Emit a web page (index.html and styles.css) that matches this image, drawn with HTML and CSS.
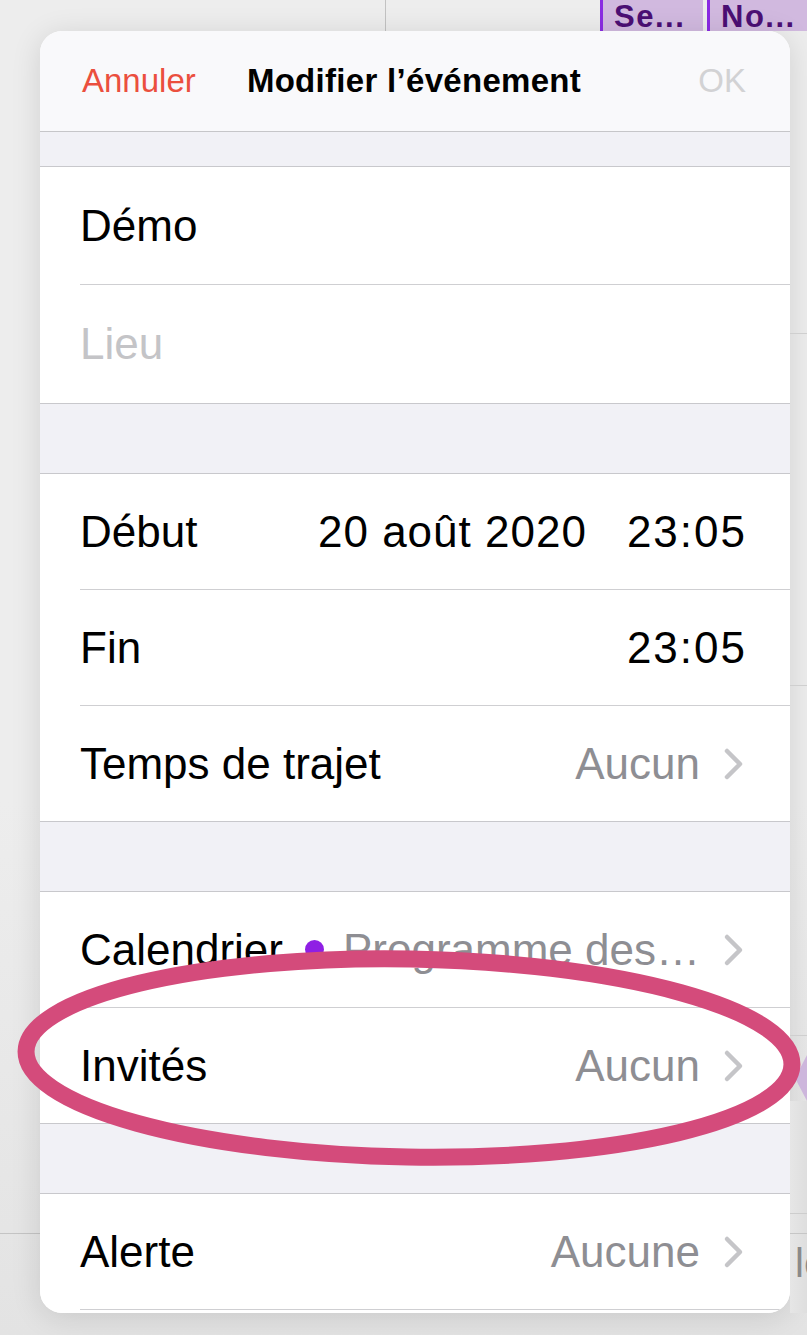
FILE: index.html
```html
<!doctype html>
<html lang="fr">
<head>
    <meta charset="UTF-8">
    <meta name="viewport" content="width=device-width, initial-scale=1.0">
    <title>Modifier l’événement</title>
    <link rel="stylesheet" href="styles.css">
</head>
<body>
    <div class="screen">
        <div class="backdrop-top">
            <div class="grid-line"></div>
            <div class="chips">
                <div class="chip">Se...</div>
                <div class="chip">No...</div>
            </div>
        </div>

        <div class="main-row">
            <div class="gutter-left"></div>

            <div class="sheet">
                <div class="sheet-header">
                    <a href="#" class="btn-cancel">Annuler</a>
                    <span class="sheet-title">Modifier l’événement</span>
                    <a href="#" class="btn-ok">OK</a>
                </div>

                <div class="band band-first"></div>

                <div class="group group-title">
                    <div class="row"><span class="label">Démo</span></div>
                    <div class="row"><span class="label placeholder">Lieu</span></div>
                </div>

                <div class="band"></div>

                <div class="group">
                    <div class="row">
                        <span class="label">Début</span>
                        <span class="value dark date">20 août 2020</span>
                        <span class="value dark time">23:05</span>
                    </div>
                    <div class="row">
                        <span class="label">Fin</span>
                        <span class="value dark time">23:05</span>
                    </div>
                    <div class="row">
                        <span class="label">Temps de trajet</span>
                        <span class="value">Aucun</span>
                        <svg class="chevron" viewBox="0 0 22 34"><path d="M4 4 L17 17 L4 30"/></svg>
                    </div>
                </div>

                <div class="band"></div>

                <div class="group">
                    <div class="row">
                        <span class="label">Calendrier</span>
                        <span class="value calendar"><i class="dot"></i>Programme des…</span>
                        <svg class="chevron" viewBox="0 0 22 34"><path d="M4 4 L17 17 L4 30"/></svg>
                    </div>
                    <div class="row">
                        <span class="label">Invités</span>
                        <span class="value">Aucun</span>
                        <svg class="chevron" viewBox="0 0 22 34"><path d="M4 4 L17 17 L4 30"/></svg>
                    </div>
                </div>

                <div class="band"></div>

                <div class="group">
                    <div class="row">
                        <span class="label">Alerte</span>
                        <span class="value">Aucune</span>
                        <svg class="chevron" viewBox="0 0 22 34"><path d="M4 4 L17 17 L4 30"/></svg>
                    </div>
                    <div class="row"></div>
                </div>
            </div>

            <div class="gutter-right">
                <div class="peek-arrow"></div>
                <div class="peek-shade">
                    <span class="peek">le</span>
                </div>
            </div>
        </div>

        <!-- annotation autour de la ligne Invités -->
        <svg class="ring" viewBox="0 0 807 1335">
            <ellipse cx="409" cy="1058" rx="383" ry="99" transform="rotate(1 409 1058)"/>
        </svg>
    </div>
</body>
</html>
```

FILE: styles.css
```css
body {
    margin: 0;
    background-color: #ebebeb;
    font-family: "Liberation Sans", Arial, sans-serif;
}

.screen {
    position: relative;
    width: 807px;
    height: 1335px;
    overflow: hidden;
    background: linear-gradient(#ededed 60%, #e3e3e3);
}

.backdrop-top {
    height: 31px;
    display: flex;
}

.grid-line {
    margin-left: 385px;
    width: 1px;
    background-color: #c2c2c2;
}

.chips {
    margin-left: auto;
    display: flex;
    gap: 4px;
}

.chip {
    width: 100px;
    height: 31px;
    box-sizing: border-box;
    padding: 3px 0 0 11px;
    background-color: #d1b9df;
    border-left: 3px solid #8a2be2;
    color: #4b0f74;
    font-size: 31px;
    font-weight: bold;
    letter-spacing: 1.5px;
    line-height: 28px;
    overflow: hidden;
    white-space: nowrap;
}

.chip:first-child {
    width: 103px;
}

.main-row {
    display: flex;
}

.gutter-left {
    width: 40px;
    flex-shrink: 0;
    background: linear-gradient(#c4c4c4, #c4c4c4) 0 1202px / 100% 1px no-repeat;
}

.gutter-right {
    width: 17px;
    flex-shrink: 0;
    display: flex;
    flex-direction: column;
    overflow: hidden;
    background:
        linear-gradient(#cfcfcf, #cfcfcf) 0 302px / 100% 1px no-repeat,
        linear-gradient(#cfcfcf, #cfcfcf) 0 654px / 100% 1px no-repeat,
        linear-gradient(#cfcfcf, #cfcfcf) 0 1004px / 100% 1px no-repeat;
}

.peek-arrow {
    margin-top: 1024px;
    margin-left: 5px;
    width: 12px;
    height: 46px;
    background-color: #cdb6dc;
    clip-path: polygon(100% 0, 0 50%, 100% 100%);
}

.peek-shade {
    flex: 1;
    display: flex;
    flex-direction: column;
    justify-content: flex-end;
    background:
        linear-gradient(#cdcdcd, #cdcdcd) 0 112px / 100% 1px no-repeat,
        linear-gradient(#c6c6c6, #c6c6c6) 0 132px / 100% 1px no-repeat,
        linear-gradient(90deg, #e6e6e6, #dedede);
}

.peek {
    margin-bottom: 30px;
    margin-left: 5px;
    color: #8a8a8a;
    font-size: 40px;
    line-height: 40px;
    white-space: nowrap;
}

.sheet {
    width: 750px;
    height: 1282px;
    flex-shrink: 0;
    background-color: #ffffff;
    border-radius: 22px;
    overflow: hidden;
    box-shadow: 0 4px 30px rgba(0, 0, 0, 0.12);
}

.sheet-header {
    height: 100px;
    display: grid;
    grid-template-columns: 1fr auto 1fr;
    align-items: center;
    padding: 0 44px 0 42px;
    background-color: #f9f9fb;
    border-bottom: 1px solid #c6c6c9;
    font-size: 33px;
}

.sheet-header a {
    text-decoration: none;
}

.btn-cancel {
    color: #eb4f3e;
}

.sheet-title {
    color: #000000;
    font-weight: bold;
    font-size: 33px;
    letter-spacing: 0.3px;
}

.btn-ok {
    justify-self: end;
    color: #d2d2d4;
}

.band {
    height: 69px;
    background-color: #f1f1f6;
}

.band-first {
    height: 34px;
}

.group {
    background-color: #ffffff;
    border-top: 1px solid #c8c8cc;
    border-bottom: 1px solid #c8c8cc;
    padding-left: 40px;
}

.row {
    height: 115px;
    display: flex;
    align-items: center;
    padding-right: 45px;
    font-size: 44px;
    color: #000000;
    border-bottom: 1px solid #cfcfd2;
}

.row:last-child {
    border-bottom: none;
}

.group-title .row {
    height: 117px;
}

.group-title .row:last-child {
    height: 118px;
}

.label {
    flex-shrink: 0;
}

.placeholder {
    color: #c4c4c7;
}

.value {
    margin-left: auto;
    color: #8e8e93;
    white-space: nowrap;
}

.value.dark {
    color: #000000;
}

.date {
    letter-spacing: 1px;
}

.time {
    letter-spacing: 2px;
    margin-right: -2px;
}

.date + .time {
    margin-left: 40px;
}

.calendar {
    display: flex;
    align-items: center;
}

.dot {
    width: 19px;
    height: 19px;
    margin-right: 19px;
    border-radius: 50%;
    background-color: #8f1fe4;
}

.chevron {
    width: 22px;
    height: 34px;
    margin-left: 23px;
    fill: none;
    stroke: #c5c5c8;
    stroke-width: 4.5;
    stroke-linecap: round;
    stroke-linejoin: round;
}

.ring {
    position: absolute;
    left: 0;
    top: 0;
    width: 807px;
    height: 1335px;
    pointer-events: none;
}

.ring ellipse {
    fill: none;
    stroke: #d44b7b;
    stroke-width: 17;
}
```
